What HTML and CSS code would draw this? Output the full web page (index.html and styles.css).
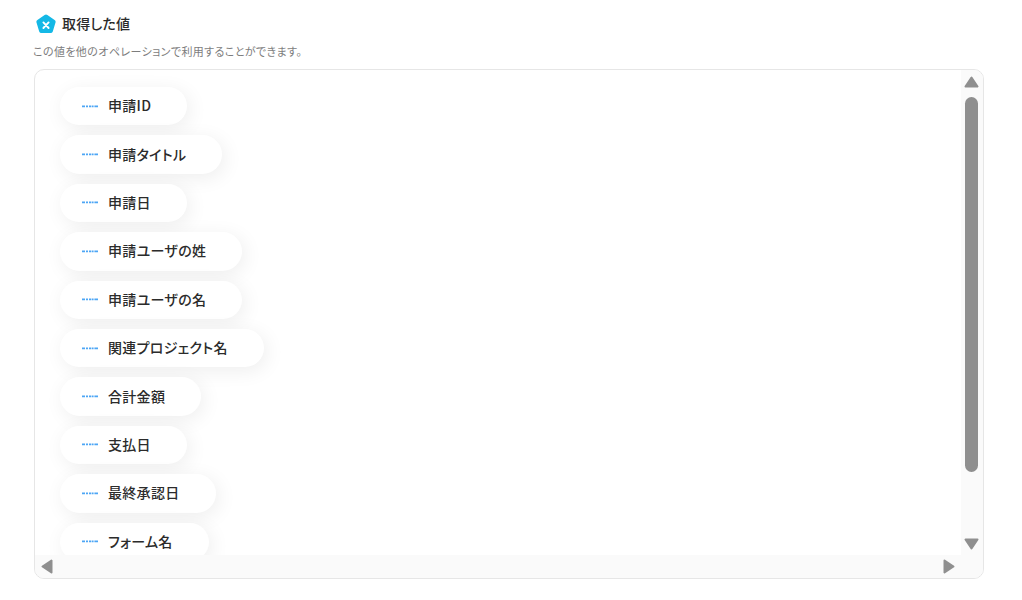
FILE: index.html
```html
<!DOCTYPE html>
<html lang="ja">

<head>
  <meta charset="UTF-8">
  <meta name="viewport" content="width=device-width, initial-scale=1.0">
  <title>取得した値</title>
  <link rel="stylesheet" href="styles.css">
</head>

<body>
  <div class="heading">
    <svg class="heading-icon" width="20" height="20" viewBox="0 0 20 20">
      <path d="M8.6 0.9 Q10 -0.1 11.4 0.9 L18.6 6 Q20 7 19.5 8.6 L16.8 17.4 Q16.3 19 14.6 19 L5.4 19 Q3.7 19 3.2 17.4 L0.5 8.6 Q0 7 1.4 6 Z" fill="#14b8e6" />
      <path d="M7.4 8.4 L12.6 14 M12.6 8.4 L7.4 14" stroke="#fff" stroke-width="1.9" stroke-linecap="round" />
    </svg>
    <span class="heading-text">取得した値</span>
  </div>
  <p class="note">この値を他のオペレーションで利用することができます。</p>

  <div class="box">
    <div class="list">
      <div class="pill"><svg class="logo"><use href="#yoom" /></svg>申請ID</div>
      <div class="pill"><svg class="logo"><use href="#yoom" /></svg>申請タイトル</div>
      <div class="pill"><svg class="logo"><use href="#yoom" /></svg>申請日</div>
      <div class="pill"><svg class="logo"><use href="#yoom" /></svg>申請ユーザの姓</div>
      <div class="pill"><svg class="logo"><use href="#yoom" /></svg>申請ユーザの名</div>
      <div class="pill"><svg class="logo"><use href="#yoom" /></svg>関連プロジェクト名</div>
      <div class="pill"><svg class="logo"><use href="#yoom" /></svg>合計金額</div>
      <div class="pill"><svg class="logo"><use href="#yoom" /></svg>支払日</div>
      <div class="pill"><svg class="logo"><use href="#yoom" /></svg>最終承認日</div>
      <div class="pill"><svg class="logo"><use href="#yoom" /></svg>フォーム名</div>
    </div>

    <div class="vbar">
      <svg width="15" height="12" viewBox="0 0 15 12"><path d="M7.5 1.5 L13.5 10.5 L1.5 10.5 Z" class="arrow" /></svg>
      <div class="vthumb"></div>
      <svg width="15" height="12" viewBox="0 0 15 12"><path d="M1.5 1.5 L13.5 1.5 L7.5 10.5 Z" class="arrow" /></svg>
    </div>

    <div class="hbar">
      <svg width="12" height="15" viewBox="0 0 12 15"><path d="M10.5 1.5 L10.5 13.5 L1.5 7.5 Z" class="arrow" /></svg>
      <svg width="12" height="15" viewBox="0 0 12 15"><path d="M1.5 1.5 L10.5 7.5 L1.5 13.5 Z" class="arrow" /></svg>
    </div>
    <div class="corner"></div>
  </div>

  <svg width="0" height="0" class="defs">
    <symbol id="yoom" viewBox="0 0 16 3">
      <path d="M0 0.6h3v1.7h-3z M4 0.6h2v1.7h-2z M7 0.6h2.4v1.7h-2.4z M10 0.6h1.6v1.7h-1.6z M12.4 0.6h3.6v1.7h-3.6z" fill="#4da6f5" />
    </symbol>
  </svg>
</body>

</html>
```

FILE: styles.css
```css
body {
  margin: 0;
  padding: 14px 38px 0 33px;
  background-color: white;
  font-family: "Noto Sans CJK JP", "Noto Sans", sans-serif;
  font-feature-settings: "palt";
  color: #2b2b2b;
}

.heading {
  display: flex;
  align-items: center;
  gap: 6px;
  height: 20px;
  padding-left: 3px;
}

.heading-text {
  padding-bottom: 2px;
  font-size: 14px;
  font-weight: 500;
  letter-spacing: 0.2px;
}

.note {
  margin: 9px 0 10px;
  font-size: 11px;
  line-height: 16px;
  letter-spacing: 0.4px;
  color: #7d7d7d;
}

.defs {
  position: absolute;
}

.box {
  display: grid;
  grid-template-columns: 1fr 22px;
  grid-template-rows: 1fr 23px;
  height: 508px;
  margin-left: 1px;
  border: 1px solid #e6e6e6;
  border-radius: 10px;
  overflow: hidden;
}

.list {
  display: flex;
  flex-direction: column;
  align-items: flex-start;
  gap: 10px;
  padding: 17px 0 0 25px;
  overflow: hidden;
}

.pill {
  display: flex;
  flex: none;
  box-sizing: border-box;
  align-items: center;
  height: 38.4px;
  padding: 0 36px 2px 22px;
  border-radius: 20px;
  background-color: white;
  box-shadow: 3px 4px 20px rgba(0, 0, 0, 0.07);
  font-size: 14px;
  font-weight: 500;
  letter-spacing: 0.3px;
}

.logo {
  width: 16px;
  height: 3px;
  margin: 2px 10px 0 0;
}

.arrow {
  fill: #8f8f8f;
  stroke: #8f8f8f;
  stroke-width: 2;
  stroke-linejoin: round;
}

.vbar {
  display: flex;
  flex-direction: column;
  align-items: flex-start;
  padding: 6px 0 5px 3px;
  background-color: #fafafa;
}

.vthumb {
  flex: 1;
  width: 13px;
  margin: 9px 0 66px 1px;
  border-radius: 7px;
  background-color: #8f8f8f;
}

.hbar {
  display: flex;
  align-items: center;
  justify-content: space-between;
  padding: 0 6px 0 6px;
  background-color: #fafafa;
}

.corner {
  background-color: #fafafa;
}
```
